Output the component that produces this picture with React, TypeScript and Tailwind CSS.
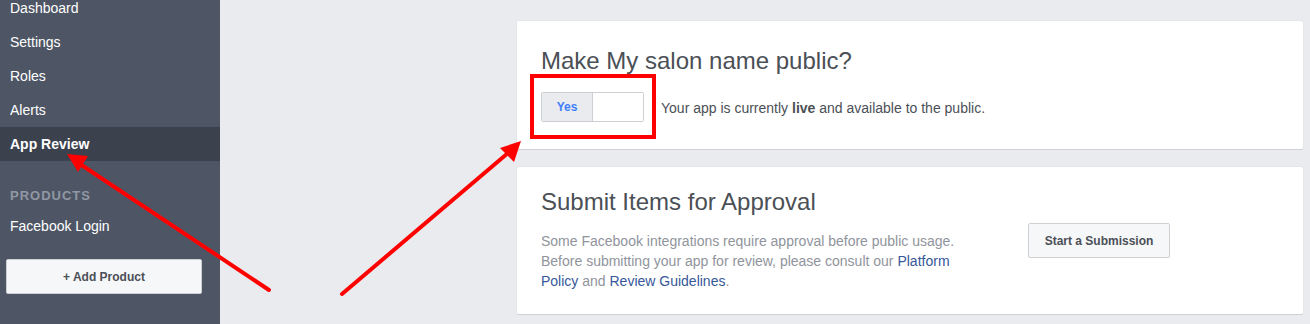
const navItems = ["Dashboard", "Settings", "Roles", "Alerts", "App Review"];

export default function App() {
  return (
    <div className="relative flex h-screen w-full overflow-hidden bg-[#e9ebee] font-['Liberation_Sans',Arial,sans-serif]">
      {/* sidebar */}
      <aside className="w-[220px] shrink-0 bg-[#4e5665]">
        <nav className="-mt-[9px]">
          {navItems.map((item) => (
            <div
              key={item}
              className={
                item === "App Review"
                  ? "flex h-[34px] items-center bg-[#3b414d] px-[10px] text-[14px] font-bold text-white"
                  : "flex h-[34px] items-center px-[10px] text-[14px] text-white"
              }
            >
              {item}
            </div>
          ))}
        </nav>

        <div className="mt-[25px] px-[10px] text-[13px] leading-[20px] font-bold tracking-[1px] text-[#9197a3]">
          PRODUCTS
        </div>
        <div className="mt-[3px] flex h-[34px] items-center px-[10px] text-[14px] text-white">
          Facebook Login
        </div>

        <div className="mt-[16px] px-[6px]">
          <button className="h-[35px] w-[196px] rounded-[2px] border border-[#ccd0d5] bg-[#f6f7f9] text-[12px] font-bold text-[#4b4f56]">
            + Add Product
          </button>
        </div>
      </aside>

      {/* main */}
      <main className="flex-1 pl-[296px] pt-[20px]">
        <div className="flex w-[788px] flex-col gap-4">
          {/* make public card */}
          <section className="rounded-[3px] border border-[#e5e6e9] border-b-[#d0d1d5] bg-white px-6 pt-[26px] pb-[27px]">
            <h2 className="text-[24px] leading-[28px] text-[#4b4f56]">
              Make My salon name public?
            </h2>
            <div className="mt-[17px] flex items-center">
              <div className="relative flex h-[30px] w-[103px] rounded-[2px] border border-[#ccd0d5]">
                <div className="flex w-[51px] items-center justify-center border-r border-[#ccd0d5] bg-[#e9ebee] text-[12px] font-bold text-[#4080ff]">
                  Yes
                </div>
                <div className="flex-1 bg-white" />
                {/* annotation box */}
                <div className="absolute -top-[19px] -left-[12px] h-[65px] w-[126px] border-4 border-[#ff0000]" />
              </div>
              <p className="ml-[17px] pt-[3px] text-[14px] text-[#4b4f56]">
                Your app is currently <b>live</b> and available to the public.
              </p>
            </div>
          </section>

          {/* submit card */}
          <section className="rounded-[3px] border border-[#e5e6e9] border-b-[#d0d1d5] bg-white px-6 pt-[21px] pb-[23px]">
            <h2 className="text-[24px] leading-[28px] text-[#4b4f56]">
              Submit Items for Approval
            </h2>
            <div className="mt-[7px] flex items-start">
              <p className="w-[440px] pt-[8px] text-[14px] leading-[20px] text-[#90949c]">
                Some Facebook integrations require approval before public usage.
                Before submitting your app for review, please consult our{" "}
                <span className="text-[#365899]">Platform Policy</span> and{" "}
                <span className="text-[#365899]">Review Guidelines</span>.
              </p>
              <button className="ml-[47px] h-[35px] w-[142px] rounded-[2px] border border-[#ced0d4] bg-[#f6f7f9] text-[12px] font-bold text-[#4b4f56]">
                Start a Submission
              </button>
            </div>
          </section>
        </div>
      </main>

      {/* annotation arrows */}
      <svg
        className="pointer-events-none absolute inset-0"
        width="1310"
        height="324"
        viewBox="0 0 1310 324"
      >
        <line x1="269" y1="290" x2="80" y2="164" stroke="#ff0000" strokeWidth="4" strokeLinecap="round" />
        <polygon points="67,154 88,156 78,172" fill="#ff0000" />
        <line x1="342" y1="294" x2="508" y2="153" stroke="#ff0000" strokeWidth="4" strokeLinecap="round" />
        <polygon points="521,141 514,162 500,148" fill="#ff0000" />
      </svg>
    </div>
  );
}
